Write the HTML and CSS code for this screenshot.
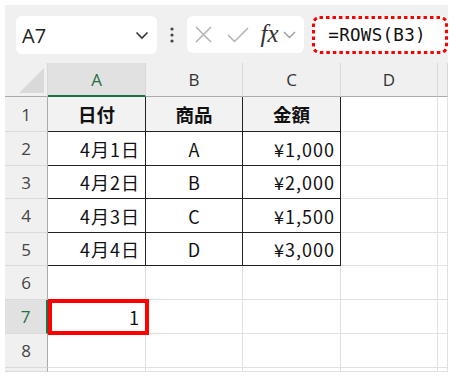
FILE: index.html
```html
<!DOCTYPE html>
<html lang="ja">
<head>
<meta charset="utf-8">
<link rel="stylesheet" href="styles.css">
</head>
<body>
<div class="app">
  <div class="toolbar">
    <div class="namebox">
      <span class="ref">A7</span>
      <svg class="chev" width="14" height="9" viewBox="0 0 14 9"><path d="M1.5 1.5 L7 7 L12.5 1.5" fill="none" stroke="#333" stroke-width="1.6"/></svg>
    </div>
    <div class="more">
      <svg width="4" height="16" viewBox="0 0 4 16"><circle cx="2" cy="2" r="1.6" fill="#444"/><circle cx="2" cy="8" r="1.6" fill="#444"/><circle cx="2" cy="14" r="1.6" fill="#444"/></svg>
    </div>
    <div class="fxbox">
      <svg width="17" height="17" viewBox="0 0 17 17"><path d="M1 1 L16 16 M16 1 L1 16" stroke="#b3b3b3" stroke-width="1.5" fill="none"/></svg>
      <svg width="22" height="16" viewBox="0 0 22 16"><path d="M1 8 L7.5 14.5 L21 1" stroke="#b3b3b3" stroke-width="1.5" fill="none"/></svg>
      <span class="fx">fx</span>
      <svg class="chev2" width="13" height="8" viewBox="0 0 13 8"><path d="M1 1 L6.5 6.5 L12 1" fill="none" stroke="#9a9a9a" stroke-width="1.4"/></svg>
    </div>
    <div class="formula">
      <span class="ftext">=ROWS(B3)</span>
      <svg class="dots" width="136" height="38" viewBox="0 0 136 38"><rect x="1.5" y="1.5" width="133" height="35" rx="6" ry="6" fill="none" stroke="#ff0000" stroke-width="3" stroke-dasharray="3.5 3"/></svg>
    </div>
  </div>
  <div class="grid">
    <div class="corner"><span class="tri"></span></div>
    <div class="ch sel">A</div><div class="ch">B</div><div class="ch">C</div><div class="ch">D</div><div class="ch last"></div>

    <div class="rh">1</div>
    <div class="c t th">日付</div><div class="c t th">商品</div><div class="c t th">金額</div><div class="c"></div><div class="c"></div>

    <div class="rh">2</div>
    <div class="c t r">4月1日</div><div class="c t m">A</div><div class="c t r">¥1,000</div><div class="c"></div><div class="c"></div>

    <div class="rh">3</div>
    <div class="c t r">4月2日</div><div class="c t m">B</div><div class="c t r">¥2,000</div><div class="c"></div><div class="c"></div>

    <div class="rh">4</div>
    <div class="c t r">4月3日</div><div class="c t m">C</div><div class="c t r">¥1,500</div><div class="c"></div><div class="c"></div>

    <div class="rh">5</div>
    <div class="c t r">4月4日</div><div class="c t m">D</div><div class="c t r">¥3,000</div><div class="c"></div><div class="c"></div>

    <div class="rh">6</div>
    <div class="c"></div><div class="c"></div><div class="c"></div><div class="c"></div><div class="c"></div>

    <div class="rh sel">7</div>
    <div class="c r active">1<span class="redbox"></span></div><div class="c"></div><div class="c"></div><div class="c"></div><div class="c"></div>

    <div class="rh">8</div>
    <div class="c"></div><div class="c"></div><div class="c"></div><div class="c"></div><div class="c"></div>

    <div class="rh"></div>
    <div class="c"></div><div class="c"></div><div class="c"></div><div class="c"></div><div class="c"></div>
  </div>
</div>
</body>
</html>
```

FILE: styles.css
```css
html, body {
  margin: 0;
  padding: 0;
  background: #ffffff;
}
.app {
  margin: 5px 0 0 5px;
  width: 443px;
  background: #f0f0f0;
}
.toolbar {
  height: 58px;
  box-sizing: border-box;
  padding: 11px 0 0 11px;
  display: flex;
  align-items: flex-start;
}
.namebox {
  width: 141px;
  height: 38px;
  background: #fff;
  border-radius: 6px;
  display: flex;
  align-items: center;
  justify-content: space-between;
  padding: 0 8px 0 6px;
  box-sizing: border-box;
}
.ref {
  font-family: "Open Sans", "Noto Sans", sans-serif;
  font-size: 20px;
  color: #222;
}
.more {
  width: 30px;
  height: 38px;
  display: flex;
  align-items: center;
  justify-content: center;
}
.fxbox {
  width: 118px;
  height: 37px;
  background: #fff;
  border-radius: 6px;
  display: flex;
  align-items: center;
  padding: 0 0 0 8px;
  box-sizing: border-box;
}
.fxbox svg:nth-child(2) { margin-left: 15px; }
.fx {
  font-family: "Liberation Serif", serif;
  font-style: italic;
  font-size: 25px;
  color: #333;
  margin-left: 12px;
  line-height: 1;
  margin-top: -3px;
}
.chev2 { margin-left: 4px; }
.formula {
  position: relative;
  width: 136px;
  height: 38px;
  margin-left: 8px;
  background: #fff;
  border-radius: 6px;
  display: flex;
  align-items: center;
  box-sizing: border-box;
  padding-left: 16px;
}
.ftext {
  font-family: "DejaVu Sans Mono", monospace;
  font-size: 17.5px;
  color: #111;
  letter-spacing: 0.3px;
}
.dots {
  position: absolute;
  left: 0;
  top: 0;
}
.grid {
  display: grid;
  grid-template-columns: 43px 98px 97px 98px 97px 10px;
  grid-template-rows: 34px 35px 34px 33px 34px 33px 34px 34px 34px 4px;
  background: #fff;
}
.grid > div {
  box-sizing: border-box;
}
.corner {
  background: #f0f0f0;
  border-right: 1px solid #d8d8d8;
  border-bottom: 1px solid #ababab;
  position: relative;
}
.tri {
  position: absolute;
  right: 3px;
  bottom: 3px;
  width: 0;
  height: 0;
  border-left: 25px solid transparent;
  border-bottom: 25px solid #d9d9d9;
}
.ch {
  background: #f0f0f0;
  border-right: 1px solid #d8d8d8;
  border-bottom: 1px solid #ababab;
  display: flex;
  align-items: center;
  justify-content: center;
  font-family: "Open Sans", "Noto Sans", sans-serif;
  font-size: 17px;
  color: #333;
}
.ch.sel {
  background: #e1e1e1;
  color: #1e7145;
  border-bottom: 2px solid #1e7145;
}
.rh {
  background: #f0f0f0;
  border-right: 1px solid #ababab;
  border-bottom: 1px solid #dadada;
  display: flex;
  align-items: center;
  justify-content: center;
  font-family: "Open Sans", "Noto Sans", sans-serif;
  font-size: 17px;
  color: #444;
}
.rh.sel {
  background: #e1e1e1;
  color: #1e7145;
  border-right: 2px solid #1e7145;
}
.c {
  border-right: 1px solid #e1e1e1;
  border-bottom: 1px solid #e1e1e1;
  display: flex;
  align-items: center;
  font-family: "Noto Sans CJK JP", sans-serif;
  font-size: 18px;
  color: #111;
}
.c.t {
  border-right: 1px solid #222;
  border-bottom: 1px solid #222;
}
.c.th {
  background: #f2f2f2;
  font-weight: bold;
  justify-content: center;
  font-size: 18.5px;
}
.c.r {
  justify-content: flex-end;
  padding-right: 5px;
  letter-spacing: 1px;
}
.c.m {
  justify-content: center;
}
.active {
  position: relative;
}
.redbox {
  position: absolute;
  left: 0;
  top: -1px;
  right: -4px;
  bottom: -2px;
  border: 4px solid #ff0000;
}
```
